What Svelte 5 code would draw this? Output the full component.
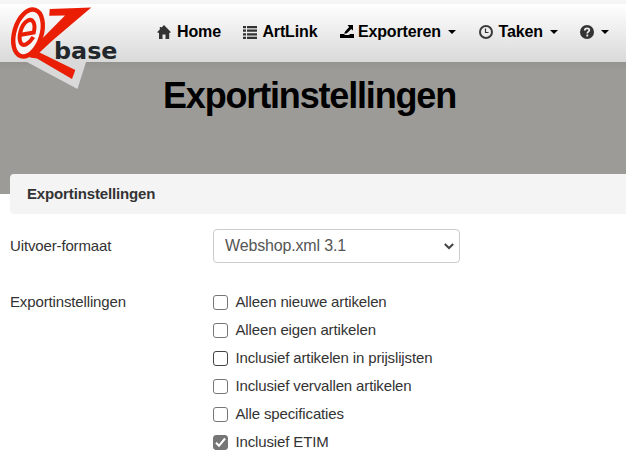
<script lang="ts">
  const navItems = [
    { id: 'home', label: 'Home', dropdown: false },
    { id: 'artlink', label: 'ArtLink', dropdown: false },
    { id: 'export', label: 'Exporteren', dropdown: true },
    { id: 'tasks', label: 'Taken', dropdown: true },
    { id: 'help', label: '', dropdown: true }
  ];

  let format = $state('Webshop.xml 3.1');

  let options = $state([
    { id: 'new', label: 'Alleen nieuwe artikelen', checked: false },
    { id: 'own', label: 'Alleen eigen artikelen', checked: false },
    { id: 'pricelists', label: 'Inclusief artikelen in prijslijsten', checked: false },
    { id: 'expired', label: 'Inclusief vervallen artikelen', checked: false },
    { id: 'specs', label: 'Alle specificaties', checked: false },
    { id: 'etim', label: 'Inclusief ETIM', checked: true }
  ]);
</script>

<header class="topbar">
  <svg class="logo" width="112" height="86" viewBox="8 4 112 86" aria-label="EZ-base">
    <path class="shadow" d="M25 61 L40 55 L86 62 L77.5 89 Z" />
    <path class="red" d="M49.8 9 L91.3 7.6 L53 40 L39.5 52.5 L75.3 70 L72 79 L37 58.5 L30 57.5 L27 54 L65 15.6 L49.2 15.8 Z" />
    <ellipse class="ring" cx="28" cy="33" rx="13.6" ry="24.2" transform="rotate(17 28 33)" />
    <path class="letter-e" d="M21 34.8 L33.8 32.4 C36 23 32.5 18 27.5 20.8 C20.5 25 18 38 20.8 43.2 C23.5 47.3 29.5 43 33.4 37" />
    <text x="54" y="58.8" textLength="63.5" lengthAdjust="spacingAndGlyphs">base</text>
  </svg>

  <nav>
    {#each navItems as item (item.id)}
      <a href="#{item.id}" class="nav-item {item.id}">
        <svg class="icon" width="14" height="14" viewBox="0 0 14 14" aria-hidden="true">
          {#if item.id === 'home'}
            <path d="M7 0 L14 7.3 L12.2 8 V14 H8.5 V9.5 H5.5 V14 H2 V8 L0 7.3 L2.8 4.5 V2 H4.4 V2.8 Z" />
          {:else if item.id === 'artlink'}
            <path d="M0 1h3v2.2H0z M4 1h10v2.2H4z M0 4.6h3v2.2H0z M4 4.6h10v2.2H4z M0 8.2h3v2.2H0z M4 8.2h10v2.2H4z M0 11.8h3V14H0z M4 11.8h10V14H4z" />
          {:else if item.id === 'export'}
            <path d="M0 9h4l1 1h4l1-1h4v4H0z M7.5 0H13v5.5l-1.8-1.6L8 7.3 6.5 8.5H4L5.5 6 9.2 2z" />
          {:else if item.id === 'tasks'}
            <circle class="line" cx="7" cy="7" r="6" />
            <path class="hands" d="M6.5 3.5v4h3" />
          {:else}
            <circle cx="7" cy="7" r="7" />
            <path class="question" d="M4.8 5.4C4.8 2.6 9.5 2.7 9.3 5.3 9.2 6.7 7.3 6.6 7.3 8.4 M7.3 9.6v2" />
          {/if}
        </svg>
        {#if item.label}
          <span class="nav-label">{item.label}</span>
        {/if}
        {#if item.dropdown}
          <span class="caret"></span>
        {/if}
      </a>
    {/each}
  </nav>
</header>

<main>
  <div class="banner">
    <h1>Exportinstellingen</h1>
  </div>

  <h2 class="panel-heading">Exportinstellingen</h2>

  <form>
    <div class="row">
      <label class="row-label" for="format">Uitvoer-formaat</label>
      <div class="select-wrap">
        <select id="format" bind:value={format}>
          <option>Webshop.xml 3.1</option>
        </select>
        <svg class="chevron" width="10" height="7" viewBox="0 0 10 7" aria-hidden="true">
          <path d="M0.8 1 L5 5 L9.2 1" />
        </svg>
      </div>
    </div>

    <div class="row options">
      <span class="row-label">Exportinstellingen</span>
      <div class="checks">
        {#each options as option (option.id)}
          <label class="check {option.id}">
            <input type="checkbox" bind:checked={option.checked} />
            <span class="box">
              {#if option.checked}
                <svg width="15" height="15" viewBox="0 0 15 15" aria-hidden="true">
                  <path d="M3 7.8 L6 10.8 L12 3.5" />
                </svg>
              {/if}
            </span>
            <span>{option.label}</span>
          </label>
        {/each}
      </div>
    </div>
  </form>
</main>

<style>
  :global(body) {
    background: #fff;
    color: #333;
    font-family: 'Liberation Sans', Arial, sans-serif;
    font-size: 15px;
    letter-spacing: -0.14px;
    overflow: hidden;
  }

  .topbar {
    position: relative;
    box-sizing: border-box;
    height: 62px;
    border-top: 4px solid #f5f5f5;
    background: linear-gradient(#fff, #d9d9d9);
  }

  .logo {
    position: absolute;
    top: 0;
    left: 8px;
    z-index: 2;
  }

  .shadow {
    fill: #d9d9d9;
  }

  .red {
    fill: #e91e05;
  }

  .ring {
    fill: #f6f6f6;
    stroke: #e91e05;
    stroke-width: 4.4;
  }

  .letter-e {
    fill: none;
    stroke: #e91e05;
    stroke-width: 4;
  }

  .logo text {
    fill: #22272b;
    font-family: 'DejaVu Sans', sans-serif;
    font-size: 23px;
    font-weight: bold;
    letter-spacing: 0;
  }

  nav {
    display: flex;
    align-items: center;
    height: 56px;
    padding-left: 157px;
  }

  .nav-item {
    display: flex;
    align-items: center;
    margin-right: 22.5px;
    color: #000;
    font-size: 16px;
    font-weight: bold;
    text-decoration: none;
  }

  .icon {
    flex: none;
    margin-right: 6px;
    fill: #333;
  }

  .artlink .icon {
    margin-right: 5px;
  }

  .export .icon {
    margin-right: 4px;
    fill: #000;
  }

  .line {
    fill: none;
    stroke: #3a3a3a;
    stroke-width: 2;
  }

  .hands {
    fill: none;
    stroke: #333;
    stroke-width: 1.2;
  }

  .question {
    fill: none;
    stroke: #eee;
    stroke-width: 1.8;
  }

  .caret {
    margin-left: 7px;
    border-top: 4px solid #000;
    border-left: 4px solid transparent;
    border-right: 4px solid transparent;
  }

  .help .caret {
    margin-left: 1px;
  }

  .banner {
    box-sizing: border-box;
    height: 132px;
    padding: 13px 0 0 163px;
    background: linear-gradient(#949390, #9c9b98 8px);
  }

  h1 {
    margin: 0;
    color: #000;
    font-size: 36px;
    line-height: 42px;
    letter-spacing: -1.17px;
  }

  .panel-heading {
    position: relative;
    margin: -20px 0 0 10px;
    padding-left: 17px;
    border-radius: 4px 0 0 4px;
    background: #f4f4f4;
    font-size: 15px;
    line-height: 40px;
  }

  form {
    padding: 15px 0 0 10px;
  }

  .row {
    display: flex;
    align-items: center;
  }

  .row-label {
    width: 203px;
  }

  label.row-label {
    margin-top: -2px;
  }

  .select-wrap {
    position: relative;
    width: 247px;
    height: 34px;
  }

  select {
    appearance: none;
    box-sizing: border-box;
    width: 100%;
    height: 100%;
    padding: 0 12px 1px 11px;
    border: 1px solid #ccc;
    border-radius: 4px;
    background: #fff;
    color: #555;
    font-family: inherit;
    font-size: 16px;
    letter-spacing: -0.16px;
  }

  .chevron {
    position: absolute;
    top: 14px;
    right: 6px;
    pointer-events: none;
  }

  .chevron path {
    fill: none;
    stroke: #444;
    stroke-width: 2;
  }

  .options {
    align-items: flex-start;
    margin-top: 25px;
    line-height: 28px;
  }

  .check {
    display: flex;
    align-items: center;
    height: 28px;
  }

  .check input {
    position: absolute;
    opacity: 0;
  }

  .box {
    box-sizing: border-box;
    width: 15px;
    height: 15px;
    margin: 1px 7.5px 0 0;
    border: 1px solid #767676;
    border-radius: 3px;
    background: #fff;
  }

  .pricelists .box {
    border-color: #444;
  }

  input:checked + .box {
    background: #767676;
  }

  .box svg {
    display: block;
    margin: -1px;
  }

  .box path {
    fill: none;
    stroke: #fff;
    stroke-width: 2;
  }
</style>
